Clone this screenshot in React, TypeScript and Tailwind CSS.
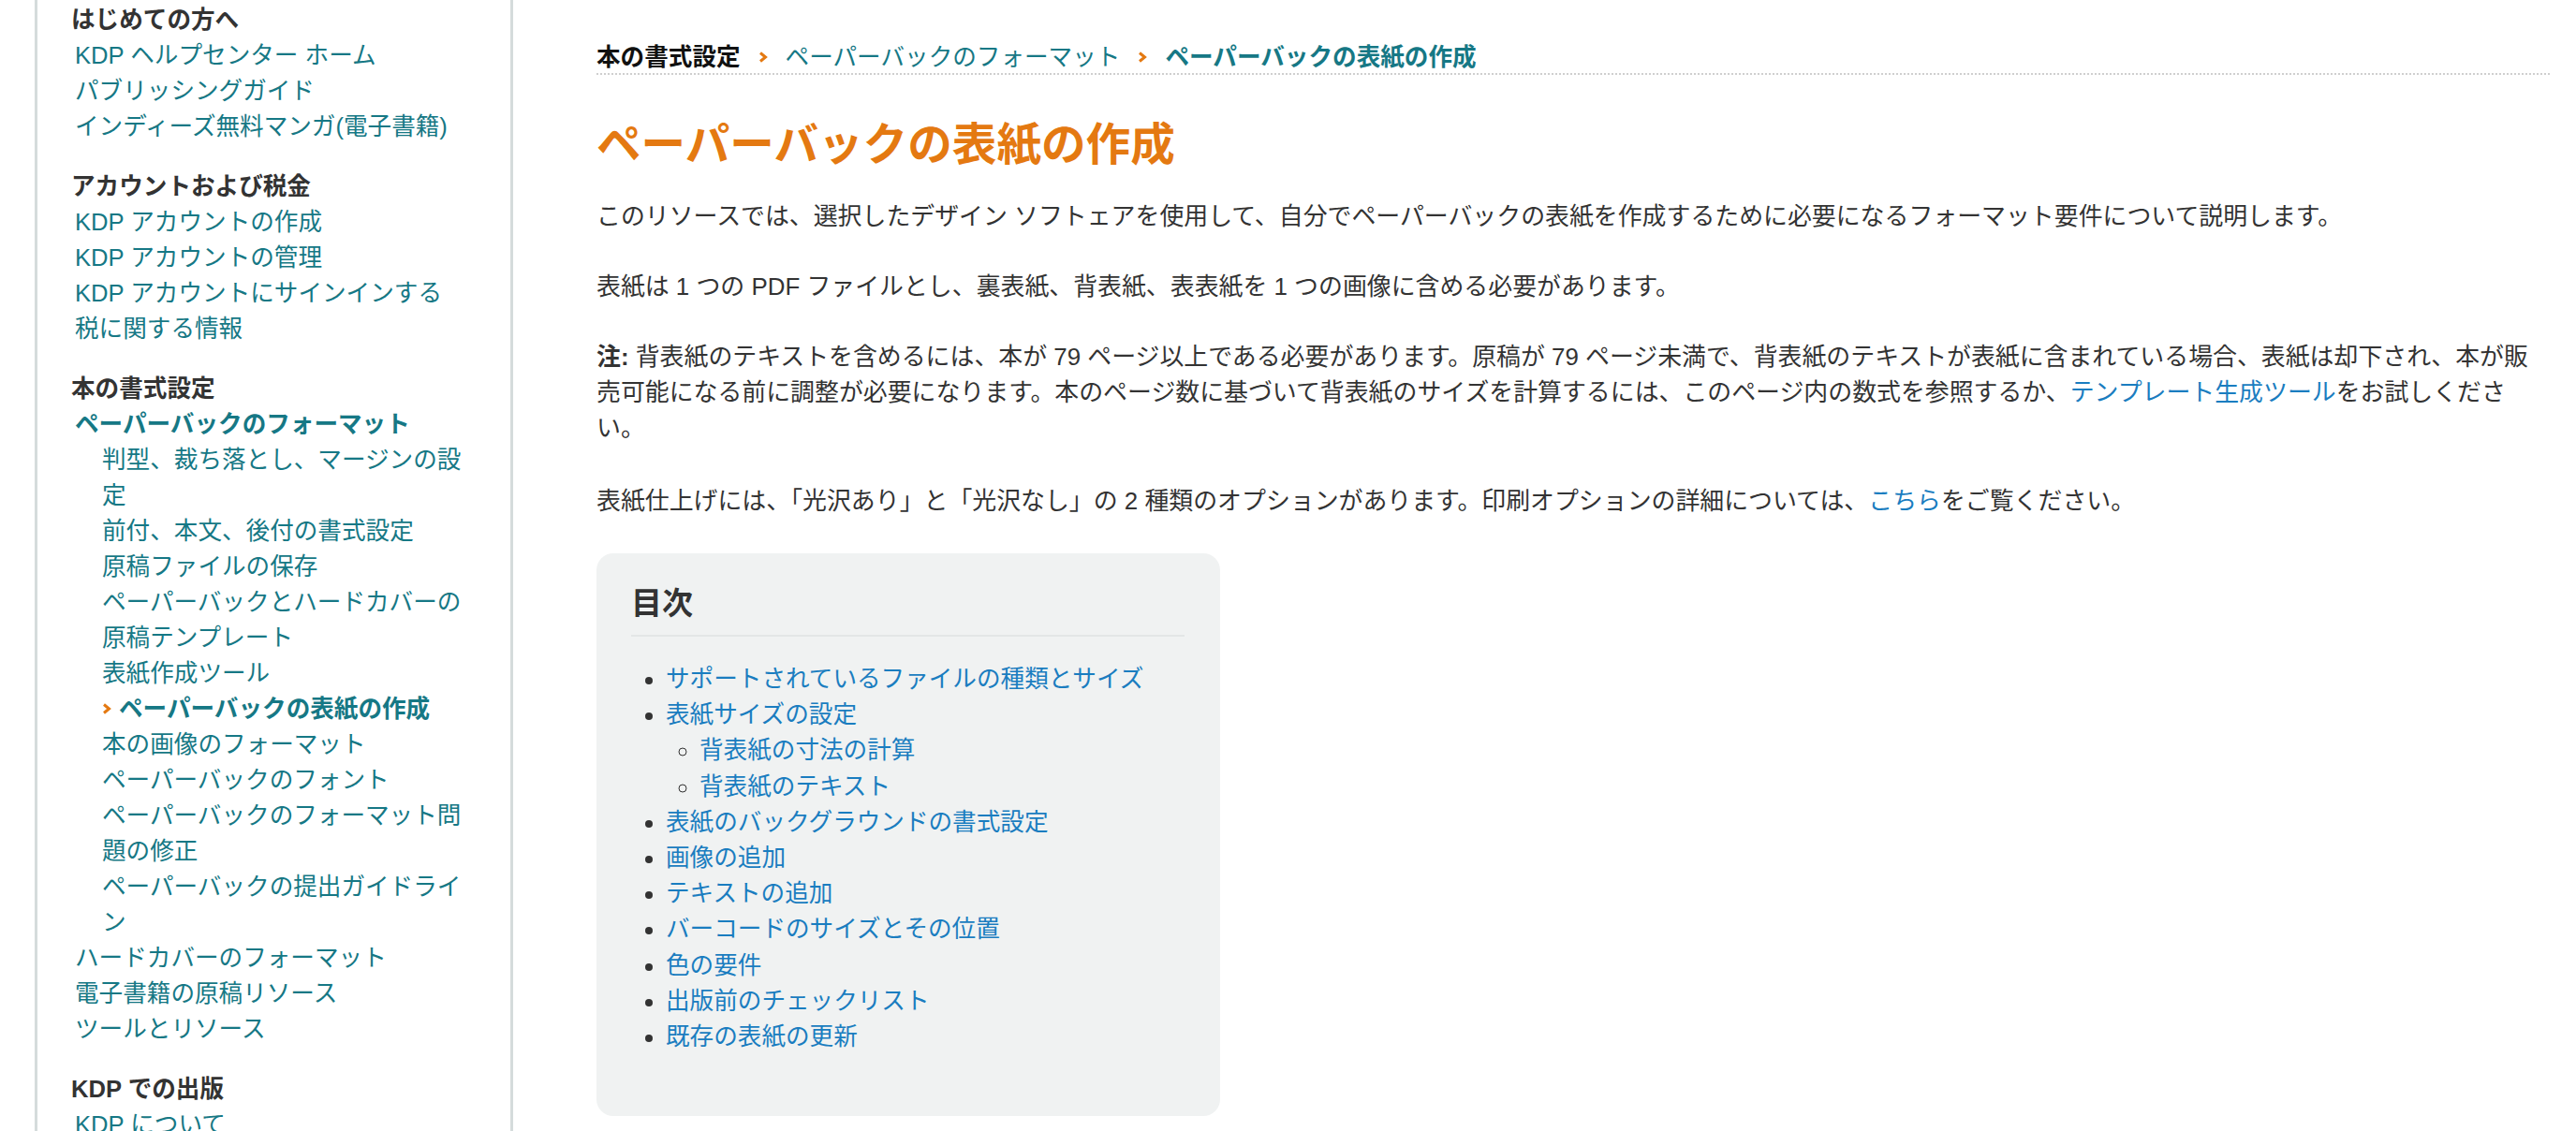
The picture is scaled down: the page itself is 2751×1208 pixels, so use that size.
import React from "react";

// types
interface NavLink {
  label: string;
  bold?: boolean;
  current?: boolean;
  children?: NavLink[];
}

interface NavSection {
  title: string;
  links: NavLink[];
}

// sidebar data
const sections: NavSection[] = [
  {
    title: "はじめての方へ",
    links: [
      { label: "KDP ヘルプセンター ホーム" },
      { label: "パブリッシングガイド" },
      { label: "インディーズ無料マンガ(電子書籍)" },
    ],
  },
  {
    title: "アカウントおよび税金",
    links: [
      { label: "KDP アカウントの作成" },
      { label: "KDP アカウントの管理" },
      { label: "KDP アカウントにサインインする" },
      { label: "税に関する情報" },
    ],
  },
  {
    title: "本の書式設定",
    links: [
      {
        label: "ペーパーバックのフォーマット",
        bold: true,
        children: [
          { label: "判型、裁ち落とし、マージンの設定" },
          { label: "前付、本文、後付の書式設定" },
          { label: "原稿ファイルの保存" },
          { label: "ペーパーバックとハードカバーの原稿テンプレート" },
          { label: "表紙作成ツール" },
          { label: "ペーパーバックの表紙の作成", current: true },
          { label: "本の画像のフォーマット" },
          { label: "ペーパーバックのフォント" },
          { label: "ペーパーバックのフォーマット問題の修正" },
          { label: "ペーパーバックの提出ガイドライン" },
        ],
      },
      { label: "ハードカバーのフォーマット" },
      { label: "電子書籍の原稿リソース" },
      { label: "ツールとリソース" },
    ],
  },
  {
    title: "KDP での出版",
    links: [{ label: "KDP について" }],
  },
];

// table of contents data
const toc = [
  { label: "サポートされているファイルの種類とサイズ" },
  {
    label: "表紙サイズの設定",
    children: ["背表紙の寸法の計算", "背表紙のテキスト"],
  },
  { label: "表紙のバックグラウンドの書式設定" },
  { label: "画像の追加" },
  { label: "テキストの追加" },
  { label: "バーコードのサイズとその位置" },
  { label: "色の要件" },
  { label: "出版前のチェックリスト" },
  { label: "既存の表紙の更新" },
];

// small orange chevron
const Chevron = () => (
  <svg width="10" height="12" viewBox="0 0 10 12" className="shrink-0">
    <polyline
      points="2,1.5 7.5,6 2,10.5"
      fill="none"
      stroke="#e47911"
      strokeWidth="3"
      strokeLinejoin="miter"
    />
  </svg>
);

// Sidebar
const Sidebar = () => (
  <aside className="ml-[37px] w-[511px] shrink-0 h-full border-l-[3px] border-r-[3px] border-[#d5dbdb] pl-[36px] pr-[40px] pt-[2px] leading-[38px] text-[25.6px]">
    {sections.map((section, i) => (
      <div key={section.title} className={i > 0 ? "mt-[26px]" : ""}>
        {/* section title */}
        <div className="font-bold text-[#333]">{section.title}</div>

        {/* links */}
        <ul className="pl-[4px]">
          {section.links.map((link) => (
            <li key={link.label}>
              <a className={`text-[#167885] ${link.bold ? "font-bold" : ""}`}>{link.label}</a>
              {link.children && (
                <ul className="pl-[29px]">
                  {link.children.map((child) => (
                    <li key={child.label}>
                      {child.current ? (
                        <span className="flex items-center">
                          <Chevron />
                          <span className="ml-[8px] font-bold text-[#167885]">{child.label}</span>
                        </span>
                      ) : (
                        <a className="text-[#167885]">{child.label}</a>
                      )}
                    </li>
                  ))}
                </ul>
              )}
            </li>
          ))}
        </ul>
      </div>
    ))}
  </aside>
);

// App
const App: React.FC = () => {
  return (
    <div className="flex w-[2751px] h-[1208px] overflow-hidden bg-white text-[#333] font-['Liberation_Sans','Noto_Sans_CJK_JP',sans-serif]">
      <Sidebar />

      <main className="ml-[89px] w-[2086px] shrink-0 pt-[44px] text-[25.9px] leading-[38px]">
        {/* breadcrumb */}
        <div className="flex items-center h-[36px] text-[25.6px] border-b-2 border-dotted border-[#cfcfcf]">
          <span className="font-bold text-[#111]">本の書式設定</span>
          <span className="mx-[19px]"><Chevron /></span>
          <a className="text-[#167885]">ペーパーバックのフォーマット</a>
          <span className="mx-[19px]"><Chevron /></span>
          <span className="font-bold text-[#167885]">ペーパーバックの表紙の作成</span>
        </div>

        {/* title */}
        <h1 className="mt-[47px] text-[47.6px] leading-[56px] font-bold text-[#e47911]">
          ペーパーバックの表紙の作成
        </h1>

        {/* body */}
        <p className="mt-[29px]">
          このリソースでは、選択したデザイン ソフトェアを使用して、自分でペーパーバックの表紙を作成するために必要になるフォーマット要件について説明します。
        </p>
        <p className="mt-[37px]">
          表紙は 1 つの PDF ファイルとし、裏表紙、背表紙、表表紙を 1 つの画像に含める必要があります。
        </p>
        <p className="mt-[37px]">
          <b>注:</b> 背表紙のテキストを含めるには、本が 79 ページ以上である必要があります。原稿が 79 ページ未満で、背表紙のテキストが表紙に含まれている場合、表紙は却下され、本が販売可能になる前に調整が必要になります。本のページ数に基づいて背表紙のサイズを計算するには、このページ内の数式を参照するか、
          <a className="text-[#1a7dc0]">テンプレート生成ツール</a>
          をお試しください。
        </p>
        <p className="mt-[40px]">
          表紙仕上げには、「光沢あり」と「光沢なし」の 2 種類のオプションがあります。印刷オプションの詳細については、
          <a className="text-[#1a7dc0]">こちら</a>
          をご覧ください。
        </p>

        {/* table of contents */}
        <div className="mt-[37px] w-[666px] rounded-[18px] bg-[#f0f2f2] pl-[37px] pr-[38px] pt-[34px] pb-[66px]">
          <h2 className="text-[33px] leading-[40px] font-bold text-[#333] pb-[13px] border-b-2 border-[#e3e6e6]">目次</h2>
          <ul className="mt-[26px] list-disc pl-[37px] leading-[38.2px] text-[25.6px]">
            {toc.map((item) => (
              <li key={item.label}>
                <a className="text-[#1a7dc0]">{item.label}</a>
                {item.children && (
                  <ul className="list-[circle] pl-[36px]">
                    {item.children.map((child) => (
                      <li key={child}>
                        <a className="text-[#1a7dc0]">{child}</a>
                      </li>
                    ))}
                  </ul>
                )}
              </li>
            ))}
          </ul>
        </div>
      </main>
    </div>
  );
};

export default App;
